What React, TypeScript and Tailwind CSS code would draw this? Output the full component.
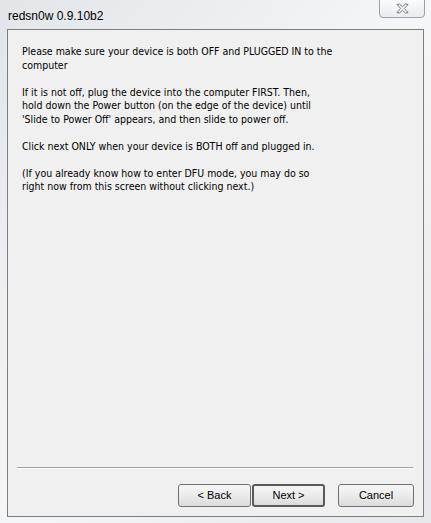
export default function App() {
  const btn =
    "h-[23px] rounded-[3px] bg-gradient-to-b from-[#f6f6f6] via-[#ebebeb] to-[#dcdcdc] text-[11px] text-black";
  return (
    <main className="flex h-[523px] w-[431px] flex-col bg-gradient-to-br from-[#e2e5e9] via-[#f5f6f7] to-[#e6e8eb] font-['Liberation_Sans',Arial,sans-serif]">
      <div className="relative h-[29px] shrink-0">
        <span className="absolute left-[8px] top-[7px] text-[12px] text-black">
          redsn0w 0.9.10b2
        </span>
        <button className="absolute right-[6px] top-[-1px] flex h-[19px] w-[46px] items-center justify-center rounded-b-[4px] border border-[#9ba1a8] bg-gradient-to-b from-[#fbfbfb] to-[#e9ebee]">
          <svg width="13" height="11" viewBox="0 0 13 11">
            <path
              d="M1 1.5 L3.5 1 L6.5 3.8 L9.5 1 L12 1.5 L8.3 5.5 L12 9.5 L9.5 10 L6.5 7.2 L3.5 10 L1 9.5 L4.7 5.5 Z"
              fill="#ffffff"
              stroke="#6e7378"
              strokeWidth="1"
              strokeLinejoin="round"
            />
          </svg>
        </button>
      </div>
      <div className="mx-[7px] flex h-[488px] flex-col border border-[#7e7e7e] bg-[#f0f0f0]">
        <div className="flex flex-1 flex-col gap-[13.5px] pl-[14px] pt-[15px] font-['DejaVu_Sans_Condensed','Liberation_Sans',sans-serif] text-[10.5px] leading-[13.5px] text-black">
          <p>
            Please make sure your device is both OFF and PLUGGED IN to the
            <br />
            computer
          </p>
          <p>
            If it is not off, plug the device into the computer FIRST. Then,
            <br />
            hold down the Power button (on the edge of the device) until
            <br />
            'Slide to Power Off' appears, and then slide to power off.
          </p>
          <p>Click next ONLY when your device is BOTH off and plugged in.</p>
          <p>
            (If you already know how to enter DFU mode, you may do so
            <br />
            right now from this screen without clicking next.)
          </p>
        </div>
        <div className="ml-[9px] mr-[10px] h-[2px] border-t border-b border-t-[#a0a0a0] border-b-white" />
        <div className="mb-[9px] mr-[9px] mt-[15px] flex justify-end">
          <button className={`${btn} w-[73px] border border-[#707070]`}>
            &lt; Back
          </button>
          <button className={`${btn} ml-px w-[73px] border-2 border-[#5a5a5a]`}>
            Next &gt;
          </button>
          <button className={`${btn} ml-[13px] w-[76px] border border-[#707070]`}>
            Cancel
          </button>
        </div>
      </div>
    </main>
  );
}
